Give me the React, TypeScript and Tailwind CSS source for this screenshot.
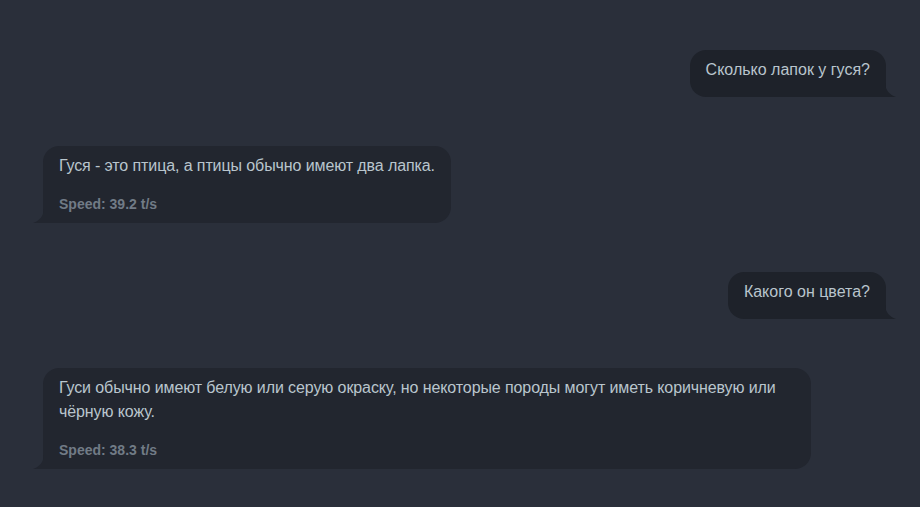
import React from 'react';

interface Message {
  role: 'user' | 'assistant';
  text: string;
  speed?: string;
}

const MESSAGES: Message[] = [
  { role: 'user', text: 'Сколько лапок у гуся?' },
  { role: 'assistant', text: 'Гуся - это птица, а птицы обычно имеют два лапка.', speed: '39.2' },
  { role: 'user', text: 'Какого он цвета?' },
  {
    role: 'assistant',
    text: 'Гуси обычно имеют белую или серую окраску, но некоторые породы могут иметь коричневую или чёрную кожу.',
    speed: '38.3',
  },
];

function Tail({ side, color }: { side: 'left' | 'right'; color: string }) {
  // little curved spike under the bubble's bottom corner
  if (side === 'right') {
    return (
      <svg className="absolute bottom-0 right-[-10px]" width="11" height="14" viewBox="0 0 11 14">
        <path d="M0 0 C0.5 7 4 11.5 11 14 L0 14 Z" fill={color} />
      </svg>
    );
  }
  return (
    <svg className="absolute bottom-0 left-[-10px]" width="11" height="14" viewBox="0 0 11 14">
      <path d="M11 0 C10.5 7 7 11.5 0 14 L11 14 Z" fill={color} />
    </svg>
  );
}

function Bubble({ msg }: { msg: Message }) {
  if (msg.role === 'user') {
    return (
      <div className="flex justify-end pr-[34px]">
        <div className="relative max-w-3xl rounded-2xl rounded-br-none bg-[#1e222a] px-4 pt-2 pb-[15px] text-[16px] leading-6 text-[#b9c5cd]">
          {msg.text}
          <Tail side="right" color="#1e222a" />
        </div>
      </div>
    );
  }
  return (
    <div className="flex justify-start pl-[43px]">
      <div className="relative max-w-3xl rounded-2xl rounded-bl-none bg-[#22262f] px-4 pt-2 pb-[9px] text-[16px] leading-6 tracking-[-0.1px] text-[#b9c5cd]">
        <div>{msg.text}</div>
        <div className="mt-4 text-[14px] font-bold leading-5 tracking-normal text-[#717b86]">Speed: {msg.speed} t/s</div>
        <Tail side="left" color="#22262f" />
      </div>
    </div>
  );
}

export default function App() {
  return (
    <div
      className="flex h-[507px] w-full flex-col gap-[49px] overflow-hidden bg-[#2a2f3a] pt-[50px]"
      style={{ fontFamily: '"Liberation Sans", Arial, sans-serif' }}
    >
      {MESSAGES.map((m, i) => (
        <Bubble key={i} msg={m} />
      ))}
    </div>
  );
}
